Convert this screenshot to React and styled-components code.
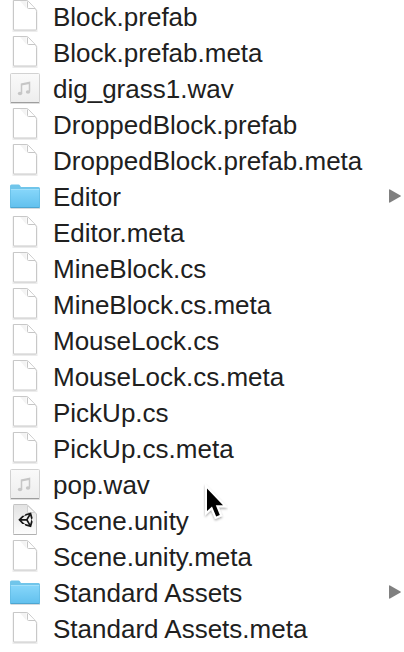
import React from "react";
import styled, { createGlobalStyle } from "styled-components";

const GlobalStyle = createGlobalStyle`
  body {
    margin: 0;
    background: #ffffff;
    color: #202020;
    font-family: "Liberation Sans", Arial, sans-serif;
  }
`;

const Column = styled.main`
  position: relative;
`;

const FileList = styled.ul`
  margin: 0;
  padding: 0 0 4px;
  list-style: none;
`;

const FileRow = styled.li`
  display: flex;
  align-items: flex-start;
  gap: 12px;
  height: 36px;
  padding: 0 3px 0 9px;
`;

const Icon = styled.svg`
  flex: none;
  display: block;
  width: 32px;
  height: 32px;
`;

const FileName = styled.span`
  flex: 1;
  font-size: 26px;
  line-height: 34px;
  white-space: nowrap;
`;

const ExpandButton = styled.button`
  display: flex;
  align-items: center;
  height: 32px;
  margin: 0;
  padding: 0;
  border: 0;
  background: none;
`;

const Arrow = styled.svg`
  display: block;
  width: 12px;
  height: 14px;
`;

const Pointer = styled.svg`
  position: absolute;
  left: 200px;
  top: 480px;
  width: 32px;
  height: 44px;
  pointer-events: none;
`;

function DocumentIcon() {
  return (
    <Icon viewBox="0 0 32 32" aria-hidden="true">
      <path d="M4.500 1.500h14l9 9.500v20h-23z" fill="none" stroke="#ececec" strokeWidth="2" />
      <path d="M5 .5h12q1.500 0 2.500 1l7 7.500q1 1 1 2.500v17.500q0 1-1 1h-21.500q-.500 0-.500-1v-28q0-1 .500-1z" fill="#fff" stroke="#c8c8c8" />
      <path d="M11 1h6.500v7.500z" fill="#f4f4f4" />
      <path d="M18.500 1.500v6q0 1 1 1h6.500" fill="#fff" stroke="#c6c6c6" strokeLinejoin="round" />
    </Icon>
  );
}

function AudioIcon() {
  return (
    <Icon viewBox="0 0 32 32" aria-hidden="true">
      <defs>
        <linearGradient id="audio" x2="0" y2="1">
          <stop stopColor="#fafafa" />
          <stop offset="1" stopColor="#ededed" />
        </linearGradient>
      </defs>
      <rect x="1" y="2" width="30" height="30" rx="1" fill="#dedede" />
      <rect x="1.500" y="1.500" width="29" height="29" rx="1" fill="url(#audio)" stroke="#d2d2d2" />
      <path d="M2 30.500h28" stroke="#9e9e9e" />
      <path d="M12.500 21.500v-9.500l8-1.500v9" fill="none" stroke="#c6c6c6" strokeWidth="1.500" />
      <path d="M12.500 12l8-1.500v1.500l-8 1.500z" fill="#c6c6c6" />
      <ellipse cx="11" cy="21.500" rx="2.200" ry="1.700" fill="#c6c6c6" />
      <ellipse cx="19" cy="20" rx="2.200" ry="1.700" fill="#c6c6c6" />
    </Icon>
  );
}

function FolderIcon() {
  return (
    <Icon viewBox="0 0 32 32" aria-hidden="true">
      <defs>
        <linearGradient id="folder" x2="0" y2="1">
          <stop stopColor="#86d6fa" />
          <stop offset="1" stopColor="#63c1ee" />
        </linearGradient>
      </defs>
      <path d="M1.500 28.500h29.500" stroke="#d5dade" />
      <path d="M1 6q0-1.500 1.500-1.500h7q1 0 1.500 1l1 1.500h17.500q1.500 0 1.500 1.500v18.500q0 1-1 1h-28q-1 0-1-1z" fill="#70c5ea" />
      <path d="M1 9.500h30v17.500h-30z" fill="url(#folder)" />
      <path d="M1 9.500h30" stroke="#a2e0fa" />
      <path d="M1.500 9v18M30.500 9v18" stroke="#5fb9e2" opacity=".6" />
      <path d="M1.500 27.500h29" stroke="#4da6d1" />
    </Icon>
  );
}

function UnityIcon() {
  return (
    <Icon viewBox="0 0 32 32" aria-hidden="true">
      <defs>
        <linearGradient id="scene" x2="0" y2="1">
          <stop stopColor="#e2e2e2" />
          <stop offset="1" stopColor="#fdfdfd" />
        </linearGradient>
      </defs>
      <path d="M5 .5h13l9.500 9.500v20q0 .500-1 .500h-21.500q-.500 0-.500-1v-28q0-1 .500-1z" fill="url(#scene)" stroke="#c4c4c4" />
      <path d="M18.500 1.500v7h7.500z" fill="#f8f8f8" stroke="#d0d0d0" />
      <path d="M4.500 30.500h23" stroke="#b0b0b0" />
      <path
        transform="translate(8 6) scale(.82)"
        fillRule="evenodd"
        fill="#161616"
        d="M9.110 17H6.500l-4.910-5L6.500 7h2.610l1.310-2.260L17.210 3l1.870 6.740L17.770 12l1.310 2.260L17.210 21l-6.790-1.740zM9.250 16.750l5.130 1.380L11.420 13H5.500zM16.120 17.130L17.500 12l-1.380-5.130L13.150 12zM9.250 7.250L5.500 11h5.920l2.960-5.130z"
      />
    </Icon>
  );
}

const icons = {
  document: DocumentIcon,
  audio: AudioIcon,
  folder: FolderIcon,
  unity: UnityIcon,
};

const files = [
  { name: "Block.prefab", kind: "document" },
  { name: "Block.prefab.meta", kind: "document" },
  { name: "dig_grass1.wav", kind: "audio" },
  { name: "DroppedBlock.prefab", kind: "document" },
  { name: "DroppedBlock.prefab.meta", kind: "document" },
  { name: "Editor", kind: "folder" },
  { name: "Editor.meta", kind: "document" },
  { name: "MineBlock.cs", kind: "document" },
  { name: "MineBlock.cs.meta", kind: "document" },
  { name: "MouseLock.cs", kind: "document" },
  { name: "MouseLock.cs.meta", kind: "document" },
  { name: "PickUp.cs", kind: "document" },
  { name: "PickUp.cs.meta", kind: "document" },
  { name: "pop.wav", kind: "audio" },
  { name: "Scene.unity", kind: "unity" },
  { name: "Scene.unity.meta", kind: "document" },
  { name: "Standard Assets", kind: "folder" },
  { name: "Standard Assets.meta", kind: "document" },
];

function FileEntry({ name, kind }) {
  const KindIcon = icons[kind];
  const nameId = name.replace(/\W/g, "-");
  return (
    <FileRow>
      <KindIcon />
      <FileName id={nameId}>{name}</FileName>
      {kind === "folder" && (
        <ExpandButton type="button" aria-labelledby={nameId}>
          <Arrow viewBox="0 0 12 14" aria-hidden="true">
            <path d="M0 1q0-1 1-.600l10.500 6q.800.600 0 1.200l-10.500 6q-1 .400-1-.600z" fill="#808080" />
          </Arrow>
        </ExpandButton>
      )}
    </FileRow>
  );
}

export default function App() {
  return (
    <>
      <GlobalStyle />
      <Column>
        <FileList>
          {files.map((file) => (
            <FileEntry key={file.name} {...file} />
          ))}
        </FileList>
        <Pointer viewBox="0 0 32 44" aria-hidden="true">
          <defs>
            <filter id="shadow" x="-30%" y="-30%" width="160%" height="160%">
              <feDropShadow dx="0" dy="1.500" stdDeviation="1.200" floodOpacity=".35" />
            </filter>
          </defs>
          <path
            d="M7 8.500v22.500l5-4.500 4.200 10 3.600-1.500-4-9.800h7.200z"
            fill="#000"
            stroke="#fff"
            strokeWidth="4"
            paintOrder="stroke"
            filter="url(#shadow)"
          />
        </Pointer>
      </Column>
    </>
  );
}
